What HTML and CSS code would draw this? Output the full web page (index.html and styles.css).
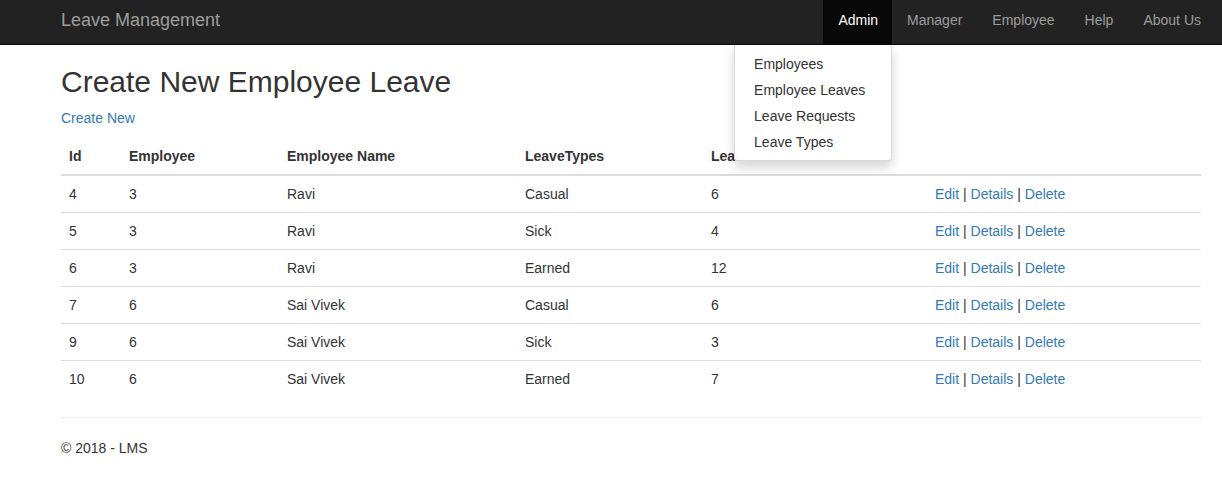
FILE: index.html
```html
<!DOCTYPE html>
<html>
<head>
<meta charset="utf-8">
<title>Leave Management</title>
<link rel="stylesheet" href="styles.css">
</head>
<body>
<nav class="navbar">
  <div class="container nav-inner">
    <a class="brand" href="#">Leave Management</a>
    <ul class="nav">
      <li class="dropdown active">
        <a href="#">Admin</a>
        <ul class="dropdown-menu">
          <li><a href="#">Employees</a></li>
          <li><a href="#">Employee Leaves</a></li>
          <li><a href="#">Leave Requests</a></li>
          <li><a href="#">Leave Types</a></li>
        </ul>
      </li>
      <li><a href="#">Manager</a></li>
      <li><a href="#">Employee</a></li>
      <li><a href="#">Help</a></li>
      <li><a href="#">About Us</a></li>
    </ul>
  </div>
</nav>
<main class="container">
  <h2 class="title">Create New Employee Leave</h2>
  <p class="create"><a href="#">Create New</a></p>
  <table class="table">
    <thead>
      <tr>
        <th class="c1">Id</th>
        <th class="c2">Employee</th>
        <th class="c3">Employee Name</th>
        <th class="c4">LeaveTypes</th>
        <th class="c5">Leave Balance</th>
        <th class="c6"></th>
      </tr>
    </thead>
    <tbody>
      <tr><td>4</td><td>3</td><td>Ravi</td><td>Casual</td><td>6</td><td><a href="#">Edit</a> | <a href="#">Details</a> | <a href="#">Delete</a></td></tr>
      <tr><td>5</td><td>3</td><td>Ravi</td><td>Sick</td><td>4</td><td><a href="#">Edit</a> | <a href="#">Details</a> | <a href="#">Delete</a></td></tr>
      <tr><td>6</td><td>3</td><td>Ravi</td><td>Earned</td><td>12</td><td><a href="#">Edit</a> | <a href="#">Details</a> | <a href="#">Delete</a></td></tr>
      <tr><td>7</td><td>6</td><td>Sai Vivek</td><td>Casual</td><td>6</td><td><a href="#">Edit</a> | <a href="#">Details</a> | <a href="#">Delete</a></td></tr>
      <tr><td>9</td><td>6</td><td>Sai Vivek</td><td>Sick</td><td>3</td><td><a href="#">Edit</a> | <a href="#">Details</a> | <a href="#">Delete</a></td></tr>
      <tr><td>10</td><td>6</td><td>Sai Vivek</td><td>Earned</td><td>7</td><td><a href="#">Edit</a> | <a href="#">Details</a> | <a href="#">Delete</a></td></tr>
    </tbody>
  </table>
  <hr class="rule">
  <footer class="footer"><p>&copy; 2018 - LMS</p></footer>
</main>
</body>
</html>
```

FILE: styles.css
```css
* { box-sizing: border-box; }
html, body { margin: 0; padding: 0; }
body {
  font-family: "Liberation Sans", Arial, sans-serif;
  font-size: 14px;
  line-height: 20px;
  color: #333;
  background: #fff;
}
a { color: #337ab7; text-decoration: none; }

.container {
  width: 1140px;
  margin-left: 61px;
}

.navbar {
  background: #222;
  border-bottom: 1px solid #080808;
  height: 45px;
}
.nav-inner {
  display: flex;
  justify-content: space-between;
  align-items: stretch;
  height: 44px;
  width: 1155px;
}
.brand {
  color: #9d9d9d;
  font-size: 18px;
  line-height: 20px;
  padding: 10px 0 14px;
}
.nav {
  list-style: none;
  margin: 0;
  padding: 0;
  display: flex;
}
.nav > li { position: relative; }
.nav > li > a {
  display: block;
  color: #9d9d9d;
  padding: 10px 15px 14px;
  line-height: 20px;
}
.nav > li.active > a {
  background: #080808;
  color: #fff;
  padding: 10px 14px 14px 15px;
}
.dropdown-menu {
  position: absolute;
  top: 45px;
  right: 0;
  min-width: 158px;
  list-style: none;
  margin: 0;
  padding: 6px 0 5px;
  background: #fff;
  border: 1px solid rgba(0,0,0,.15);
  border-top: 0;
  border-radius: 0 0 4px 4px;
  box-shadow: 0 6px 12px rgba(0,0,0,.175);
  z-index: 10;
}
.dropdown-menu a {
  display: block;
  padding: 3px 20px 3px 19px;
  color: #333;
  white-space: nowrap;
  line-height: 20px;
}

.title {
  font-size: 30px;
  font-weight: 500;
  line-height: 33px;
  margin: 20px 0 10px;
}
.create { margin: 0 0 10px; }

.table {
  width: 1140px;
  border-collapse: collapse;
  border-spacing: 0;
  margin-bottom: 20px;
}
.table th, .table td {
  padding: 8px;
  text-align: left;
  vertical-align: top;
  line-height: 20px;
}
.table th {
  font-weight: bold;
  border-bottom: 2px solid #ddd;
}
.table td { border-top: 1px solid #ddd; }
.table tbody tr:first-child td { border-top: 0; }
.c1 { width: 60px; }
.c2 { width: 158px; }
.c3 { width: 238px; }
.c4 { width: 186px; }
.c5 { width: 224px; }
.c6 { width: 274px; }

.rule {
  margin: 20px 0;
  border: 0;
  border-top: 1px solid #eee;
}
.footer p { margin: 0 0 10px; }
```
